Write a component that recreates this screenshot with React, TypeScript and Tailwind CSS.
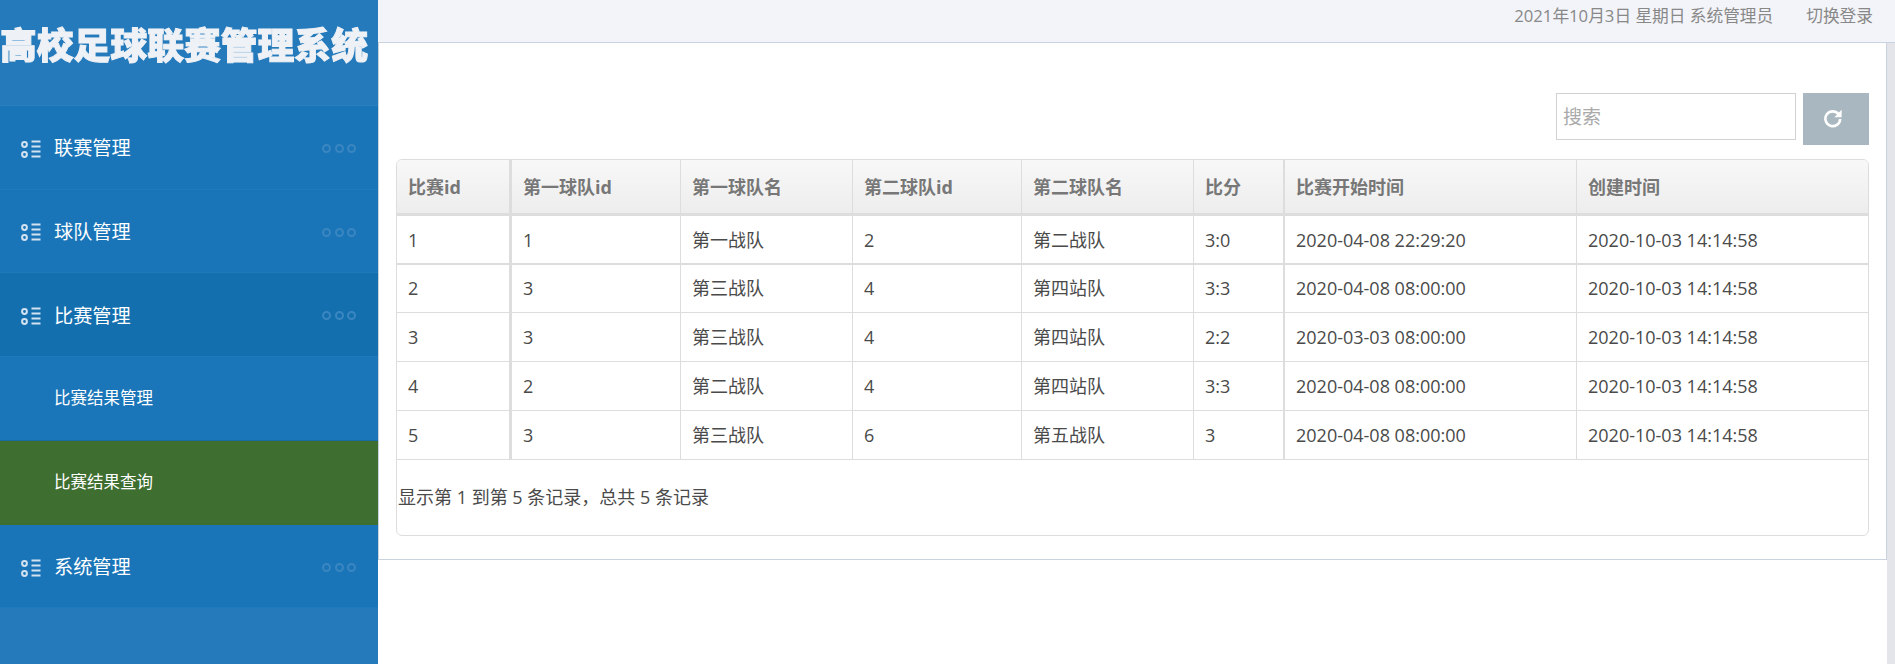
const rows = [
  ["1", "1", "第一战队", "2", "第二战队", "3:0", "2020-04-08 22:29:20", "2020-10-03 14:14:58"],
  ["2", "3", "第三战队", "4", "第四站队", "3:3", "2020-04-08 08:00:00", "2020-10-03 14:14:58"],
  ["3", "3", "第三战队", "4", "第四站队", "2:2", "2020-03-03 08:00:00", "2020-10-03 14:14:58"],
  ["4", "2", "第二战队", "4", "第四站队", "3:3", "2020-04-08 08:00:00", "2020-10-03 14:14:58"],
  ["5", "3", "第三战队", "6", "第五战队", "3", "2020-04-08 08:00:00", "2020-10-03 14:14:58"],
];

const heads = ["比赛id", "第一球队id", "第一球队名", "第二球队id", "第二球队名", "比分", "比赛开始时间", "创建时间"];

const colWidths = ["w-[115px]", "w-[169px]", "w-[172px]", "w-[169px]", "w-[172px]", "w-[91px]", "w-[292px]", "w-[291px]"];

const cellRight = (i: number) => {
  if (i === 0) return "border-r-[3px]";
  if (i === 5) return "border-r-2";
  if (i === 7) return "";
  return "border-r";
};

const MenuIcon = () => (
  <svg width="20" height="20" viewBox="0 0 20 20" fill="none" className="shrink-0">
    <circle cx="3.5" cy="5.5" r="2.4" stroke="#d2e2f0" strokeWidth="2" />
    <circle cx="3.5" cy="15.5" r="2.4" stroke="#d2e2f0" strokeWidth="2" />
    <path d="M10.5 2.5H19.5M10.5 7.5H19.5M10.5 12.5H19.5M10.5 17.5H19.5" stroke="#d2e2f0" strokeWidth="2" />
  </svg>
);

const RefreshIcon = () => (
  <svg width="20" height="20" viewBox="0 0 20 20" fill="none">
    <path d="M15.8 6.4A7.4 7.4 0 1 0 17.2 11" stroke="#fff" strokeWidth="2.6" />
    <path d="M18.6 1.8V9.2H11.4Z" fill="#fff" />
  </svg>
);

const Dots = () => (
  <div className="ml-auto mr-[22px] flex gap-[3.5px]">
    <span className="h-[9px] w-[9px] rounded-full border-2 border-[#3a86c1]" />
    <span className="h-[9px] w-[9px] rounded-full border-2 border-[#3a86c1]" />
    <span className="h-[9px] w-[9px] rounded-full border-2 border-[#3a86c1]" />
  </div>
);

const NavItem = ({ label, active }: { label: string; active?: boolean }) => (
  <div className={`flex h-[83.6px] items-center border-b border-[#2079bb] pl-[21px] pt-[3px] ${active ? "bg-[#146fae]" : "bg-[#1a75b8]"}`}>
    <MenuIcon />
    <span className="ml-[13px] text-[19.2px] text-white">{label}</span>
    <Dots />
  </div>
);

const SubItem = ({ label, active }: { label: string; active?: boolean }) => (
  <div className={`flex h-[84px] items-center pl-[54px] text-[16.5px] text-white ${active ? "bg-[#3e6e30]" : "border-b border-[#1a6aa5] bg-[#1a76b8]"}`}>
    {label}
  </div>
);

export default function App() {
  return (
    <div className="flex h-[664px] w-[1895px] overflow-hidden bg-white font-['Open_Sans','Noto_Sans_CJK_SC',sans-serif] text-[18px] text-[#4a4a4a]">
      <aside className="flex w-[378px] shrink-0 flex-col bg-[#247abb]">
        <div className="h-[106px] shrink-0 border-b border-[#2a7fbf] pt-[22px]">
          <div className="whitespace-nowrap text-[36.8px] leading-[46px] font-black text-[#eef1f6] blur-[0.6px] [-webkit-text-stroke:1px_#eef1f6]">
            高校足球联赛管理系统
          </div>
        </div>
        <NavItem label="联赛管理" />
        <NavItem label="球队管理" />
        <NavItem label="比赛管理" active />
        <SubItem label="比赛结果管理" />
        <SubItem label="比赛结果查询" active />
        <NavItem label="系统管理" />
      </aside>

      <div className="flex min-w-0 flex-1 flex-col">
        <header className="flex h-[43px] shrink-0 items-start justify-end gap-[33px] border-b border-[#c8d3df] bg-[#f3f4f9] pr-[22px] pt-[3px] text-[16.7px] text-[#888]">
          <span>2021年10月3日 星期日 系统管理员</span>
          <span>切换登录</span>
        </header>

        <div className="flex min-h-0 flex-1">
          <div className="min-w-0 flex-1 self-start">
            <main className="h-[517px] border-x border-b border-[#c8d3df] bg-white px-[17px] pt-[50px]">
              <div className="flex h-[66px] items-start justify-end gap-[7px]">
                <input
                  placeholder="搜索"
                  className="h-[47px] w-[240px] border border-[#d2d2d2] pl-[6px] text-[19px] outline-none placeholder:text-[#aaa]"
                />
                <button type="button" className="flex h-[52px] w-[66px] items-center justify-center bg-[#a9b7c0] pb-[2px] pr-[6px]">
                  <RefreshIcon />
                </button>
              </div>

              <div className="h-[377px] overflow-hidden rounded-[6px] border border-[#ddd]">
                <table className="w-[1471px] table-fixed border-separate border-spacing-0">
                  <thead>
                    <tr>
                      {heads.map((h, i) => (
                        <th
                          key={h}
                          className={`${colWidths[i]} ${cellRight(i)} h-[56px] border-b-[3px] border-[#ddd] bg-gradient-to-b from-[#f8f8f8] to-[#ededed] pl-[11px] pt-[2px] text-left font-bold text-[#777]`}
                        >
                          {h}
                        </th>
                      ))}
                    </tr>
                  </thead>
                  <tbody>
                    {rows.map((row, r) => (
                      <tr key={row[0]}>
                        {row.map((c, i) => (
                          <td
                            key={i}
                            className={`${cellRight(i)} ${r === 0 ? "h-[49px] border-b-2 pt-[1px]" : r === 1 ? "h-[48px] border-b" : "h-[49px] border-b"} border-[#ddd] pl-[11px]`}
                          >
                            {c}
                          </td>
                        ))}
                      </tr>
                    ))}
                  </tbody>
                </table>
                <div className="flex h-[75px] items-center pl-[1px]">显示第 1 到第 5 条记录，总共 5 条记录</div>
              </div>
            </main>
          </div>
          <div className="w-[8px] shrink-0 bg-[#e3e5ea]" />
        </div>
      </div>
    </div>
  );
}
